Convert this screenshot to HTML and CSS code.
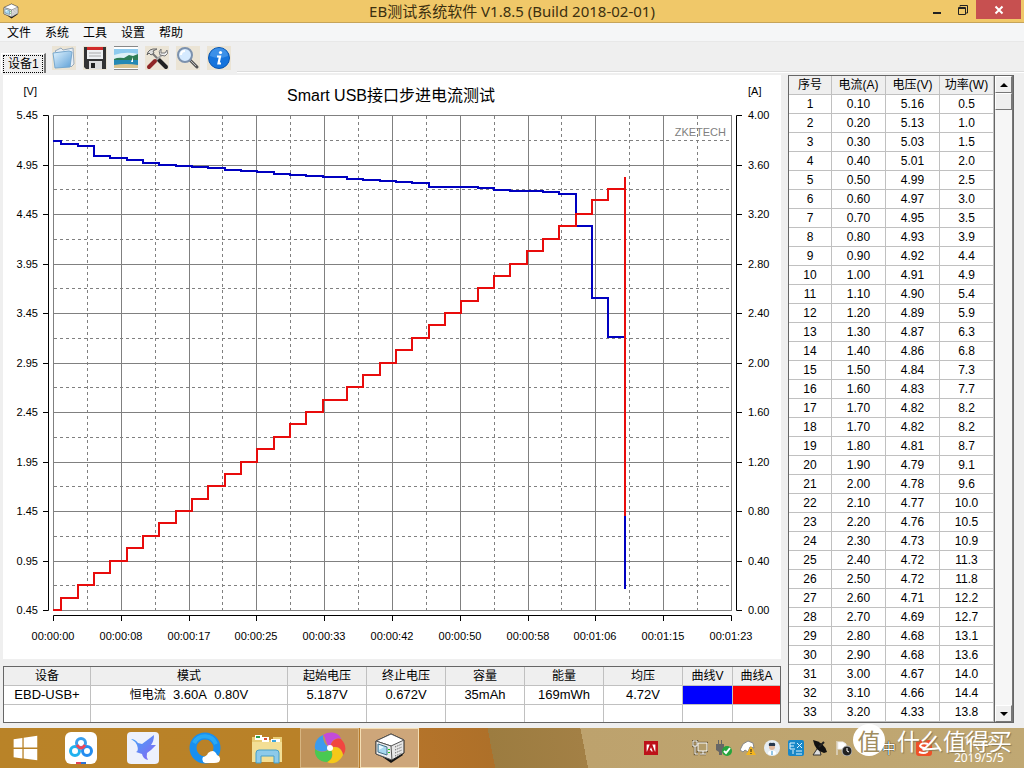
FILE: index.html
```html
<!DOCTYPE html>
<html lang="zh-CN">
<head>
<meta charset="utf-8">
<title>EB测试系统软件 V1.8.5</title>
<link rel="stylesheet" href="styles.css">
</head>
<body>
<svg class="defs" aria-hidden="true">
  <symbol id="device" viewBox="0 0 32 32">
    <path d="M3 21 17 31 29 23 27 20Z" fill="#111"/>
    <path d="M2 9 17 2 30 8 30 21 18 28 2 22Z" fill="#e6e6e6" stroke="#222"/>
    <path d="M2 9 17 2 30 8 17 14Z" fill="#fff" stroke="#555"/>
    <path d="M2 9 17 14 18 28 2 22Z" fill="#ececec" stroke="#555"/>
    <path d="M4 12 13 15 13 23 4 20Z" fill="#a9d8ef" stroke="#46738a"/>
    <path d="M5 13 10 15 5 18Z" fill="#e8f8ff"/>
    <path d="M15 17v1M15 20v1" stroke="#2c2" stroke-width="2"/>
    <path d="M21 15 28 12M21 18 28 15M21 21 28 18M21 24 28 21" stroke="#555" stroke-dasharray="1 1"/>
  </symbol>
</svg>
<header class="titlebar">
  <svg class="app-icon"><use href="#device"/></svg>
  <h1>EB测试系统软件 V1.8.5 (Build 2018-02-01)</h1>
  <div class="window-buttons">
    <button aria-label="最小化"><svg viewBox="0 0 12 12"><path d="M2 9h8" stroke="#222" stroke-width="2"/></svg></button>
    <button aria-label="还原"><svg viewBox="0 0 12 12"><path d="M3 2.500V1.500H10.500V9H9M1.500 3.500H8.500V10.500H1.500ZM1 4.500H9" fill="none" stroke="#222"/></svg></button>
    <button class="close" aria-label="关闭"><svg viewBox="0 0 12 12"><path d="M2.500 2.500 9.500 9.500M9.500 2.500 2.500 9.500" stroke="#fff" stroke-width="2"/></svg></button>
  </div>
</header>
<nav class="menubar">
  <button>文件</button><button>系统</button><button>工具</button><button>设置</button><button>帮助</button>
</nav>
<div class="toolbar">
  <button class="tab"><span>设备1</span></button>
  <div class="tools">
    <button aria-label="打开"><svg viewBox="0 0 24 24"><defs><linearGradient id="fold" x2="1" y2="1"><stop stop-color="#e2f4ff"/><stop offset="1" stop-color="#5d9fd6"/></linearGradient></defs><path d="M3 5 9 2 11 4 21 2 22 18 19 21Z" fill="#e6eef5" stroke="#9ab"/><path d="M1 7 17 5 20 6 18 21 3 22Z" fill="url(#fold)" stroke="#78a9cf"/></svg></button>
    <button aria-label="保存"><svg viewBox="0 0 24 24"><path d="M1 1H23V23H3L1 21Z" fill="#333"/><path d="M4 1H20V13H4Z" fill="#eef0f2"/><path d="M4 1H20V4H4Z" fill="#d12b2b"/><path d="M6 7H18M6 10H18" stroke="#aaa"/><path d="M6 15H19V23H6Z" fill="#ddd"/><path d="M8 17H12V22H8Z" fill="#222"/></svg></button>
    <button aria-label="图片"><svg viewBox="0 0 24 24"><path d="M0 0H24V24H0Z" fill="#fff"/><path d="M0 3H24V13H0Z" fill="#8fcbee"/><path d="M0 9Q12 5 24 8V14H0Z" fill="#dff1f6"/><path d="M0 13Q4 11 10 12L15 9 19 10 24 8V14H0Z" fill="#2e7d55"/><path d="M0 14H24V19H0Z" fill="#2489b5"/><path d="M0 19Q12 17 24 19V22H0Z" fill="#d9c592"/><path d="M19 11V16H17Z" fill="#fff"/><path d="M0 .500H24M0 23.500H24" stroke="#888"/></svg></button>
    <button aria-label="工具"><svg viewBox="0 0 24 24"><path d="M6 6 14 14" stroke="#777" stroke-width="2"/><path d="M14 14 21 21" stroke="#222" stroke-width="4" stroke-linecap="round"/><path d="M18 8 10 15" stroke="#aaa" stroke-width="2"/><path d="M10 15 4 21" stroke="#8f2525" stroke-width="4" stroke-linecap="round"/><path d="M2 9Q3 2 12 3L8 5 9 7 6 9 4 7Z" fill="#ddd" stroke="#666"/><path d="M16 3V7H20L22 4Q24 8 20 10L15 9Q13 5 16 3Z" fill="#eee" stroke="#777"/></svg></button>
    <button aria-label="搜索"><svg viewBox="0 0 24 24"><path d="M14 14 21 21" stroke="#555" stroke-width="3" stroke-linecap="round"/><path d="M14 14 20 20" stroke="#bbb" stroke-width="1"/><circle cx="9" cy="9" r="7" fill="#d5eaff" stroke="#7c91ad" stroke-width="2"/><path d="M5 9Q5 5 9 5" fill="none" stroke="#fff" stroke-width="2"/></svg></button>
    <button aria-label="信息"><svg viewBox="0 0 24 24"><circle cx="12" cy="12" r="10.500" fill="#1674dc" stroke="#0b55ad"/><path d="M3 10A9 8 0 0 1 21 10Q12 14 3 10Z" fill="#56a3f0" opacity=".6"/><circle cx="13.500" cy="6.500" r="1.600" fill="#fff"/><path d="M10 10.500H13L11.500 17.500H14" fill="none" stroke="#fff" stroke-width="2.200"/></svg></button>
  </div>
  <div class="rule"></div>
</div>
<main class="workspace">
  <section class="left">
    <svg class="chart" viewBox="3 75 778 584" role="img" aria-label="Smart USB接口步进电流测试">
      <path class="solid" d="M53.500 115V610M121.500 115V610M189.500 115V610M256.500 115V610M324.500 115V610M392.500 115V610M460.500 115V610M528.500 115V610M595.500 115V610M663.500 115V610M731.500 115V610M53 115.500H732M53 165.500H732M53 214.500H732M53 264.500H732M53 313.500H732M53 363.500H732M53 412.500H732M53 462.500H732M53 511.500H732M53 561.500H732M53 610.500H732"/>
      <path class="dashed" d="M87.500 116V610M155.500 116V610M222.500 116V610M290.500 116V610M358.500 116V610M426.500 116V610M494.500 116V610M561.500 116V610M629.500 116V610M697.500 116V610M54 140.500H731M54 189.500H731M54 239.500H731M54 288.500H731M54 338.500H731M54 387.500H731M54 437.500H731M54 486.500H731M54 536.500H731M54 585.500H731"/>
      <path class="axis" d="M43 115.500H48.500V610.500H43M43 165.500H48M43 214.500H48M43 264.500H48M43 313.500H48M43 363.500H48M43 412.500H48M43 462.500H48M43 511.500H48M43 561.500H48M742 115.500H736.500V610.500H742M737 165.500H742M737 214.500H742M737 264.500H742M737 313.500H742M737 363.500H742M737 412.500H742M737 462.500H742M737 511.500H742M737 561.500H742M53.500 621V615.500H731.500V621M121.500 616V621M189.500 616V621M256.500 616V621M324.500 616V621M392.500 616V621M460.500 616V621M528.500 616V621M595.500 616V621M663.500 616V621"/>
      <path class="volt" d="M53 141H61V144H78V146H94V156H110V158H127V160H143V163H159V165H176V166H192V167H208V168H225V170H241V171H257V172H274V174H290V175H306V176H323V177H347V179H363V180H380V181H396V182H412V183H429V187H478V188H494V190H510V191H543V192H559V194H576V226H592V298H608V337H625V589"/>
      <path class="amp" d="M53 610H61V598H78V585H94V573H110V561H127V548H143V536H159V523H176V511H192V499H208V486H225V474H241V462H257V449H274V437H290V424H306V412H323V400H347V387H363V375H380V363H396V350H412V338H429V325H445V313H461V301H478V288H494V276H510V264H527V251H543V239H559V226H576V214H592V200H608V189H625M625 177V516"/>
      <text class="chart-title" x="391" y="101">Smart USB接口步进电流测试</text>
      <text class="brand" x="726" y="136">ZKETECH</text>
      <g class="end"><text x="37" y="95">[V]</text><text x="38" y="119">5.45</text><text x="38" y="169">4.95</text><text x="38" y="218">4.45</text><text x="38" y="268">3.95</text><text x="38" y="317">3.45</text><text x="38" y="367">2.95</text><text x="38" y="416">2.45</text><text x="38" y="466">1.95</text><text x="38" y="515">1.45</text><text x="38" y="565">0.95</text><text x="38" y="614">0.45</text></g>
      <g><text x="748" y="95">[A]</text><text x="748" y="119">4.00</text><text x="748" y="169">3.60</text><text x="748" y="218">3.20</text><text x="748" y="268">2.80</text><text x="748" y="317">2.40</text><text x="748" y="367">2.00</text><text x="748" y="416">1.60</text><text x="748" y="466">1.20</text><text x="748" y="515">0.80</text><text x="748" y="565">0.40</text><text x="748" y="614">0.00</text></g>
      <g class="mid"><text x="53" y="640">00:00:00</text><text x="121" y="640">00:00:08</text><text x="189" y="640">00:00:17</text><text x="256" y="640">00:00:25</text><text x="324" y="640">00:00:33</text><text x="392" y="640">00:00:42</text><text x="460" y="640">00:00:50</text><text x="528" y="640">00:00:58</text><text x="595" y="640">00:01:06</text><text x="663" y="640">00:01:15</text><text x="731" y="640">00:01:23</text></g>
    </svg>
    <table class="grid summary">
      <colgroup><col class="c-device"><col class="c-mode"><col class="c-num"><col class="c-num"><col class="c-num"><col class="c-num"><col class="c-num"><col class="c-line"><col class="c-last"></colgroup>
      <thead><tr><th>设备</th><th>模式</th><th>起始电压</th><th>终止电压</th><th>容量</th><th>能量</th><th>均压</th><th>曲线V</th><th>曲线A</th></tr></thead>
      <tbody>
        <tr><td>EBD-USB+</td><td><span class="mode">恒电流</span>&nbsp; 3.60A&nbsp; 0.80V</td><td>5.187V</td><td>0.672V</td><td>35mAh</td><td>169mWh</td><td>4.72V</td><td class="blue"></td><td class="red"></td></tr>
        <tr><td></td><td></td><td></td><td></td><td></td><td></td><td></td><td></td><td></td></tr>
      </tbody>
    </table>
  </section>
  <section class="data">
    <table class="grid readings">
      <colgroup><col class="c-index"><col><col><col></colgroup>
      <thead><tr><th>序号</th><th>电流(A)</th><th>电压(V)</th><th>功率(W)</th></tr></thead>
      <tbody>
        <tr><td>1</td><td>0.10</td><td>5.16</td><td>0.5</td></tr>
        <tr><td>2</td><td>0.20</td><td>5.13</td><td>1.0</td></tr>
        <tr><td>3</td><td>0.30</td><td>5.03</td><td>1.5</td></tr>
        <tr><td>4</td><td>0.40</td><td>5.01</td><td>2.0</td></tr>
        <tr><td>5</td><td>0.50</td><td>4.99</td><td>2.5</td></tr>
        <tr><td>6</td><td>0.60</td><td>4.97</td><td>3.0</td></tr>
        <tr><td>7</td><td>0.70</td><td>4.95</td><td>3.5</td></tr>
        <tr><td>8</td><td>0.80</td><td>4.93</td><td>3.9</td></tr>
        <tr><td>9</td><td>0.90</td><td>4.92</td><td>4.4</td></tr>
        <tr><td>10</td><td>1.00</td><td>4.91</td><td>4.9</td></tr>
        <tr><td>11</td><td>1.10</td><td>4.90</td><td>5.4</td></tr>
        <tr><td>12</td><td>1.20</td><td>4.89</td><td>5.9</td></tr>
        <tr><td>13</td><td>1.30</td><td>4.87</td><td>6.3</td></tr>
        <tr><td>14</td><td>1.40</td><td>4.86</td><td>6.8</td></tr>
        <tr><td>15</td><td>1.50</td><td>4.84</td><td>7.3</td></tr>
        <tr><td>16</td><td>1.60</td><td>4.83</td><td>7.7</td></tr>
        <tr><td>17</td><td>1.70</td><td>4.82</td><td>8.2</td></tr>
        <tr><td>18</td><td>1.70</td><td>4.82</td><td>8.2</td></tr>
        <tr><td>19</td><td>1.80</td><td>4.81</td><td>8.7</td></tr>
        <tr><td>20</td><td>1.90</td><td>4.79</td><td>9.1</td></tr>
        <tr><td>21</td><td>2.00</td><td>4.78</td><td>9.6</td></tr>
        <tr><td>22</td><td>2.10</td><td>4.77</td><td>10.0</td></tr>
        <tr><td>23</td><td>2.20</td><td>4.76</td><td>10.5</td></tr>
        <tr><td>24</td><td>2.30</td><td>4.73</td><td>10.9</td></tr>
        <tr><td>25</td><td>2.40</td><td>4.72</td><td>11.3</td></tr>
        <tr><td>26</td><td>2.50</td><td>4.72</td><td>11.8</td></tr>
        <tr><td>27</td><td>2.60</td><td>4.71</td><td>12.2</td></tr>
        <tr><td>28</td><td>2.70</td><td>4.69</td><td>12.7</td></tr>
        <tr><td>29</td><td>2.80</td><td>4.68</td><td>13.1</td></tr>
        <tr><td>30</td><td>2.90</td><td>4.68</td><td>13.6</td></tr>
        <tr><td>31</td><td>3.00</td><td>4.67</td><td>14.0</td></tr>
        <tr><td>32</td><td>3.10</td><td>4.66</td><td>14.4</td></tr>
        <tr><td>33</td><td>3.20</td><td>4.33</td><td>13.8</td></tr>
      </tbody>
    </table>
    <div class="scrollbar">
      <button aria-label="向上"><svg viewBox="0 0 8 4"><path d="M0 4 4 0 8 4Z"/></svg></button>
      <div class="thumb"></div>
      <button class="down" aria-label="向下"><svg viewBox="0 0 8 4"><path d="M0 0H8L4 4Z"/></svg></button>
    </div>
  </section>
</main>
<footer class="taskbar">
  <div class="apps">
    <button aria-label="开始"><svg viewBox="0 0 32 32"><path d="M3 6 13 4.500V15.500H3ZM14.500 4.300 30 2V15.500H14.500ZM3 17H13V28L3 26.500ZM14.500 17H30V30L14.500 28Z" fill="#fff"/></svg></button>
    <button aria-label="网盘"><svg viewBox="0 0 32 32"><rect width="32" height="32" rx="6" fill="#fff"/><g fill="none" stroke-width="3"><circle cx="10" cy="19" r="4.500" stroke="#21b2ef"/><circle cx="22" cy="19" r="4.500" stroke="#258df0"/><circle cx="16" cy="11" r="4.500" stroke="#3aa0ee"/><path d="M12 13Q16 19 20 13" stroke="#f04458"/></g><path d="M11 31H16" stroke="#e34256" stroke-width="2"/><path d="M16 31H21" stroke="#2d74d6" stroke-width="2"/></svg></button>
    <button aria-label="迅雷"><svg viewBox="0 0 32 32"><defs><linearGradient id="bird" x2="1" y2="1"><stop stop-color="#41a8f8"/><stop offset="1" stop-color="#8a62f3"/></linearGradient></defs><rect width="32" height="32" rx="4" fill="#edf1fc"/><path d="M4 7Q8 7 11 11L15 12 27 3Q27 9 24 13L29 13 24 18 20 21Q19 25 21 28 16 27 15 22L9 20Q12 19 10 13 8 9 4 7Z" fill="url(#bird)"/></svg></button>
    <button aria-label="浏览器"><svg viewBox="0 0 32 32"><circle cx="16" cy="16" r="12" fill="none" stroke="#188ff0" stroke-width="7"/><path d="M5 11A12 12 0 0 1 27 12" fill="none" stroke="#29a9f4" stroke-width="4"/><path d="M16 31Q12 29 14 25 18 24 19 21 25 16 28 23 33 25 30 30 28 31 25 31Z" fill="#fff"/></svg></button>
    <button aria-label="文件夹"><svg viewBox="0 0 32 32"><path d="M1 5H10L12 8H22V5H31V30H1Z" fill="#e9cd76"/><path d="M4 3H11V8H4ZM11 5H18V10H11ZM20 7H29V12H20Z" fill="#fff"/><path d="M5 4H9V6H5Z" fill="#2b9e4d"/><path d="M13 6H16V8H13Z" fill="#dc4b35"/><path d="M21 8H25V10H21Z" fill="#3da5de"/><path d="M1 10H31V30H1Z" fill="#f3df95"/><path d="M5 31V21Q5 18 8 18H25Q28 18 28 21V31H23V24H10V31Z" fill="#8dcaea" stroke="#479fc7"/></svg></button>
    <button class="open" aria-label="色轮"><svg viewBox="0 0 32 32"><g id="petals"><path d="M16 16C11 11 12 5 9 3 16-2 26 1 27 7 22 5 17 8 16 16Z" fill="#c34bd9"/><path d="M16 16C17 9 22 5 27 7 33 13 32 20 29 23 28 16 23 13 16 16Z" fill="#f14640"/><path d="M16 16C23 13 28 17 29 23 25 31 18 33 13 30 19 27 20 22 16 16Z" fill="#f6c819"/><path d="M16 16C20 22 18 28 13 30 5 30 0 24 1 17 6 21 12 21 16 16Z" fill="#49c951"/><path d="M16 16C11 21 5 20 1 17 0 10 4 5 9 3 9 9 11 13 16 16Z" fill="#3c9bed"/></g><circle cx="16" cy="16" r="3" fill="#fff"/></svg></button>
    <button class="open active" aria-label="EB测试系统软件"><svg><use href="#device"/></svg></button>
  </div>
  <div class="tray">
    <svg class="adobe" viewBox="0 0 16 16"><path d="M0 0H16V16H0Z" fill="#bd1119"/><path d="M3 12V4H6.500L3.500 12ZM13 12V4H9.500L12.500 12ZM8 7 10 12H8.500L8 10.500H6.500Z" fill="#fff"/></svg>
    <svg viewBox="0 0 16 16"><path d="M6 3H15V11H6ZM8 14H14M11 11V14M3 6V14H6M1 1H5V6H1Z" fill="none" stroke="#6b5a38" stroke-width="2.500"/><path d="M6 3H15V11H6Z" fill="#b39d6c"/><path d="M6 3H15V11H6ZM8 14H14M11 11V14M3 6V14H6M1 1H5V6H1Z" fill="none" stroke="#fff"/></svg>
    <svg viewBox="0 0 16 16"><path d="M2 0H3V4H5V0H6V4H8V10L6 12V15H3V12L0 10V4H2Z" fill="#666"/><circle cx="11" cy="11" r="5" fill="#25a53c"/><path d="M8 11 10 13 14 8" fill="none" stroke="#fff" stroke-width="2"/></svg>
    <svg viewBox="0 0 16 16"><path d="M0 10 3 4 8 1 13 3 14 8 10 7 8 12 5 10 3 12Z" fill="#fff" stroke="#888"/><path d="M11 6 16 15H6Z" fill="#f4b51e"/><path d="M11 9V12M11 13V14" stroke="#222"/></svg>
    <svg viewBox="0 0 16 16"><circle cx="8" cy="8" r="8" fill="#e6edf2"/><circle cx="8" cy="7" r="3" fill="#e1b89c"/><path d="M5 6Q4 2 8 3 12 2 11 6Z" fill="#26384d"/><path d="M4 14Q4 10 8 11 12 10 12 14 8 16 4 14Z" fill="#fff"/><path d="M8 11V15" stroke="#288fce"/></svg>
    <svg viewBox="0 0 16 16"><rect width="16" height="16" rx="2" fill="#1787c8"/><path d="M2 3H7M2 6H6M2 9H7M2 3V9M9 3 14 8M14 3 9 8M8 11H14M8 14H14M5 10V14" stroke="#dff5ff"/></svg>
    <svg viewBox="0 0 16 16"><path d="M5 9 1 15H9L8 11" fill="#ddd" stroke="#333"/><path d="M1 0Q12 2 15 12L12 13Q3 11 1 0Z" fill="#111"/><path d="M7 7 12 2" stroke="#222" stroke-width="2"/></svg>
    <svg viewBox="0 0 16 16"><path d="M1 1V15M2 2H7L10 4V9H2Z" fill="#fff" stroke="#eee"/><circle cx="11" cy="11" r="5" fill="#222" stroke="#bbb"/><path d="M11 8V11L13 12" fill="none" stroke="#fff"/></svg>
  </div>
  <div class="ime"><span>中</span><svg viewBox="0 0 16 16"><rect width="16" height="16" rx="3" fill="#ef5028"/><path d="M12 4Q5 2 4 6 5 8 9 8 13 9 11 12 8 14 3 12" fill="none" stroke="#fff" stroke-width="2"/></svg></div>
  <div class="clock"><time>12:22</time><time>2019/5/5</time></div>
  <div class="watermark"><span class="seal">值</span><span>什么值得买</span></div>
</footer>
</body>
</html>
```
FILE: styles.css
```css
* { box-sizing: border-box; }
body {
  margin: 0;
  min-height: 100vh;
  display: flex;
  flex-direction: column;
  background: #efefef;
  color: #000;
  font: 12px/18px "Liberation Sans", "Noto Sans CJK SC", sans-serif;
}
button {
  margin: 0;
  padding: 0;
  border: 0;
  background: transparent;
  color: inherit;
  font: inherit;
}
svg { display: block; }
.defs { position: absolute; width: 0; height: 0; }

.titlebar {
  display: grid;
  grid-template-columns: 1fr auto 1fr;
  align-items: center;
  height: 23px;
  background: #f0c869;
  border-bottom: 1px solid #c6a45a;
}
.app-icon { width: 16px; height: 16px; margin-left: 3px; }
.titlebar h1 {
  margin: 0;
  color: #3c3010;
  font: 15px/22px "Noto Sans", "Noto Sans CJK SC", sans-serif;
}
.window-buttons { display: flex; justify-content: flex-end; align-self: start; padding-right: 3px; }
.window-buttons button { width: 26px; height: 19px; display: grid; place-items: center; }
.window-buttons svg { width: 12px; height: 12px; }
.window-buttons .close { width: 45px; background: #c75050; }

.menubar {
  display: flex;
  gap: 14px;
  height: 19px;
  padding: 1px 0 0 7px;
  background: #f5f6f7;
  border-bottom: 1px solid #e8e8e8;
}
.toolbar {
  display: flex;
  align-items: flex-end;
  gap: 6px;
  height: 33px;
  padding: 0 0 2px 1px;
}
.tab {
  height: 20px;
  padding: 1px;
  border: 1px solid #fff;
  border-right: 2px solid #777;
  border-bottom: 0;
}
.tab span { display: block; height: 18px; padding: 0 3px 0 4px; border: 1px dotted #000; line-height: 16px; }
.tools { display: flex; gap: 7px; padding-bottom: 3px; }
.tools button { width: 24px; height: 24px; background: #ebe4d5; }
.tools svg { width: 24px; height: 24px; }
.rule { flex: 1; height: 2px; border-top: 1px solid #ddd; background: #fff; }

.workspace {
  display: grid;
  grid-template-columns: minmax(0, 1fr) 226px;
  gap: 7px;
  padding: 0 10px 5px 3px;
}
.left { display: flex; flex-direction: column; justify-content: space-between; }
.chart { width: 100%; height: auto; background: #fff; font-size: 11px; }
.chart path { fill: none; }
.solid { stroke: #808080; }
.dashed { stroke: #808080; stroke-dasharray: 3 3; }
.axis { stroke: #000; }
.volt { stroke: #0000c0; stroke-width: 2; }
.amp { stroke: #e80c0c; stroke-width: 2; }
.chart-title { font-size: 16px; text-anchor: middle; }
.brand { font-size: 11px; fill: #808080; text-anchor: end; }
.end { text-anchor: end; }
.mid { text-anchor: middle; }

.grid {
  width: 100%;
  table-layout: fixed;
  border-collapse: separate;
  border-spacing: 0;
  background: #fff;
  text-align: center;
}
.grid th, .grid td {
  height: 19px;
  padding: 0;
  border-right: 1px solid #c0c0c0;
  border-bottom: 1px solid #c0c0c0;
  font-weight: normal;
  white-space: nowrap;
  overflow: hidden;
}
.grid th { background: #efefef; }
.summary { border: 1px solid #666; }
.summary td { font-size: 13px; }
.mode { font-size: 12px; }
.summary tr > :last-child { border-right: 0; }
.summary tbody tr:last-child td { height: 17px; border-bottom: 0; }
.c-device { width: 87px; }
.c-mode { width: auto; }
.c-num { width: 79px; }
.c-line { width: 50px; }
.c-last { width: 47px; }
.blue { background: #00f; }
.red { background: #f00; }

.data { display: flex; border: 1px solid #666; }
.readings { flex: 1; border-right: 1px solid #666; }
.c-index { width: 43px; }
.scrollbar {
  display: flex;
  flex-direction: column;
  width: 18px;
  border-right: 1px solid #777;
  background: #f6f6f6;
}
.scrollbar button, .thumb {
  display: grid;
  place-items: center;
  height: 17px;
  background: #efefef;
  border: 1px solid #fff;
  border-right-color: #777;
  border-bottom-color: #777;
}
.scrollbar svg { width: 8px; height: 4px; }
.scrollbar .down { margin-top: auto; }

.taskbar {
  position: relative;
  display: flex;
  flex: 1;
  min-height: 40px;
  background: linear-gradient(79deg, #b98328 0%, #b98128 30%, #b5742a 40%, #ae7029 48%, #9c7c40 48%, #a38045 57%, #bda26d 57%, #c0a873 100%);
}
.apps { display: flex; }
.apps button { width: 62px; display: grid; place-items: center; }
.apps button:first-child { width: 50px; }
.apps svg { width: 32px; height: 32px; }
.apps button:first-child svg { width: 30px; height: 28px; }
.apps .open { width: 59px; margin-left: 2px; background: #bf935b; border: 1px solid #d7b581; }
.apps .open + .open { margin-left: 1px; }
.apps .active { background: #cda67a; border-color: #f3deb5; }
.tray { display: flex; align-items: center; gap: 8px; margin-left: auto; }
.tray svg { width: 16px; height: 16px; }
.tray .adobe { width: 14px; height: 14px; margin-right: 26px; }
.ime { display: flex; align-items: center; gap: 20px; margin-left: 30px; color: #fff; font-size: 14px; text-shadow: 0 0 1px #000, 0 0 1px #000; }
.ime svg { width: 16px; height: 16px; }
.clock {
  display: flex;
  flex-direction: column;
  align-items: center;
  justify-content: flex-end;
  margin: 0 20px 2px 22px;
  color: #fff;
  font: 12px/17px "Noto Sans", sans-serif;
}
.watermark {
  position: absolute;
  right: 12px;
  top: -4px;
  display: flex;
  align-items: center;
  gap: 12px;
  color: #fff;
  font: 23px/32px "Noto Sans CJK SC", sans-serif;
  text-shadow: 1px 1px 1px #8a7a55;
}
.seal {
  width: 32px;
  height: 32px;
  border-radius: 50%;
  background: #fff;
  color: #a08c5f;
  text-align: center;
  text-shadow: none;
}
```
